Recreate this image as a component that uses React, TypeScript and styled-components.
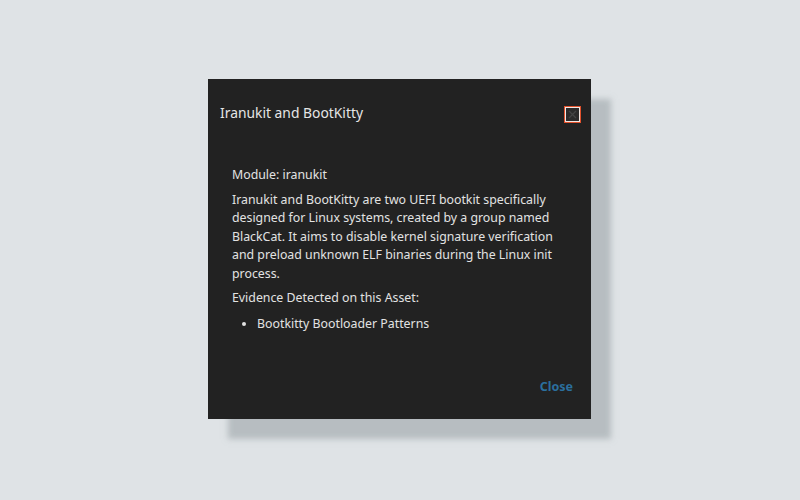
import React from 'react'
import styled, { createGlobalStyle } from 'styled-components'

const GlobalStyle = createGlobalStyle`
  html, body {
    margin: 0;
    padding: 0;
    background: #dfe3e6;
    font-family: "Noto Sans", "Open Sans", sans-serif;
  }
`

const Page = styled.div`
  width: 800px;
  height: 500px;
  display: flex;
  align-items: flex-start;
  justify-content: center;
  padding-top: 79px;
  box-sizing: border-box;
`

const Dialog = styled.div`
  width: 383px;
  height: 340px;
  margin-left: -1px;
  background: #222222;
  box-shadow: 20px 20px 6px rgba(150, 158, 162, 0.55);
  display: flex;
  flex-direction: column;
  box-sizing: border-box;
  padding: 22px 10px 24px 12px;
`

const Header = styled.div`
  display: flex;
  align-items: center;
  justify-content: space-between;
`

const Title = styled.h2`
  margin: 0;
  font-size: 13.85px;
  font-weight: 400;
  color: #e6e6e6;
  line-height: 24px;
`

const CloseIcon = styled.button`
  width: 17px;
  height: 17px;
  padding: 0;
  margin-top: 2px;
  box-sizing: border-box;
  border: 1px solid #e2512c;
  box-shadow: inset 0 0 0 1px #f1e7e3;
  background: #2b2b2b;
  display: flex;
  align-items: center;
  justify-content: center;
  cursor: pointer;
`

const Body = styled.div`
  flex: 1;
  padding: 41px 18px 0 12px;
  color: #e2e2e2;
  font-size: 12.34px;
  line-height: 18.5px;
`

const Para = styled.p`
  margin: 0 0 6px 0;
`

const List = styled.ul`
  margin: 0;
  padding-top: 1px;
  padding-left: 25px;
  list-style: disc;
`

const Footer = styled.div`
  display: flex;
  justify-content: flex-end;
  padding-right: 8px;
`

const TextButton = styled.button`
  background: none;
  border: none;
  padding: 0;
  font-family: inherit;
  font-weight: 700;
  font-size: 12.5px;
  color: #2b6f9d;
  cursor: pointer;
`

export default function App() {
  return (
    <>
      <GlobalStyle />
      <Page>
        <Dialog>
          <Header>
            <Title>Iranukit and BootKitty</Title>
            <CloseIcon aria-label="close">
              <svg width="9" height="9" viewBox="0 0 9 9">
                <path d="M1 1 L8 8 M8 1 L1 8" stroke="#444" strokeWidth="1.3" />
              </svg>
            </CloseIcon>
          </Header>
          <Body>
            <Para>Module: iranukit</Para>
            <Para>
              Iranukit and BootKitty are two UEFI bootkit specifically designed for Linux systems, created by a group named BlackCat. It aims to disable kernel signature verification and preload unknown ELF binaries during the Linux init process.
            </Para>
            <Para>Evidence Detected on this Asset:</Para>
            <List>
              <li>Bootkitty Bootloader Patterns</li>
            </List>
          </Body>
          <Footer>
            <TextButton>Close</TextButton>
          </Footer>
        </Dialog>
      </Page>
    </>
  )
}
